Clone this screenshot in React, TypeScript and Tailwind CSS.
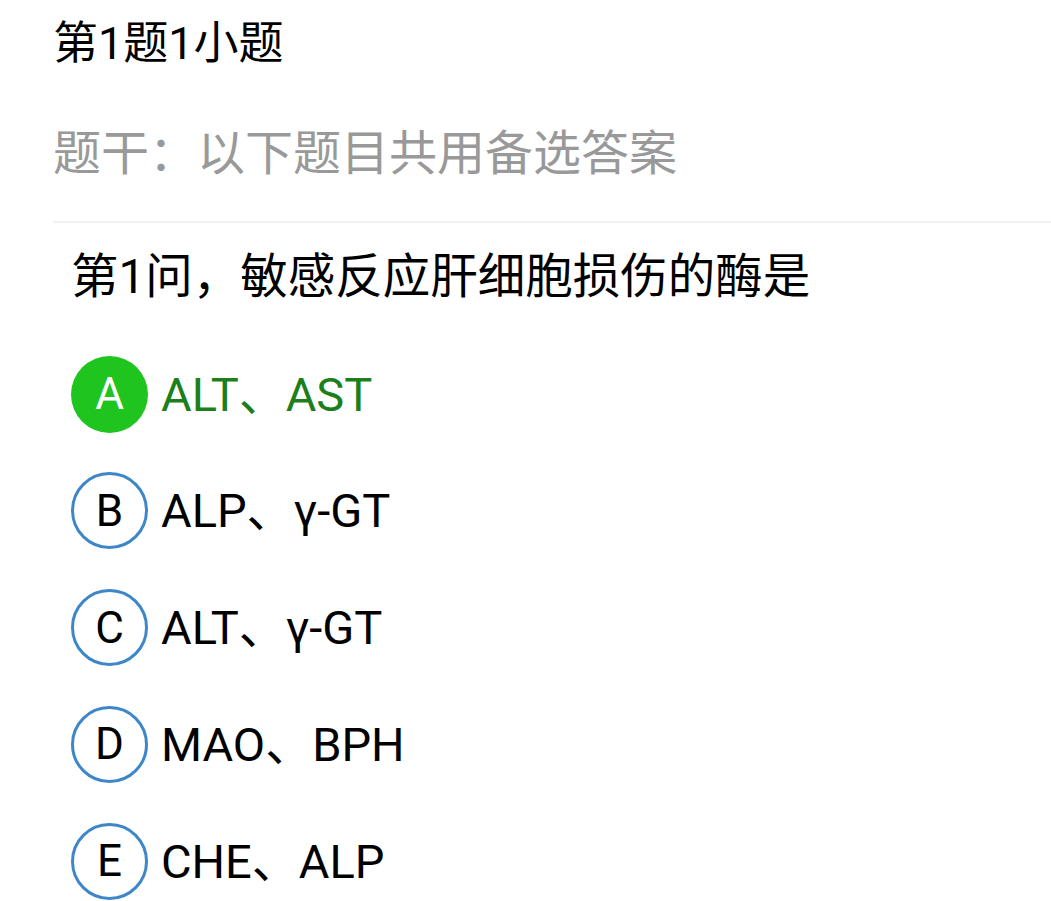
import React from 'react';

type Option = { key: string; text: string; picked?: boolean };

const options: Option[] = [
  { key: 'A', text: 'ALT、AST', picked: true },
  { key: 'B', text: 'ALP、γ-GT' },
  { key: 'C', text: 'ALT、γ-GT' },
  { key: 'D', text: 'MAO、BPH' },
  { key: 'E', text: 'CHE、ALP' },
];

const font = { fontFamily: 'Roboto, "Noto Sans CJK SC", sans-serif' };

export default function App() {
  return (
    <div className="min-h-[901px] w-[1051px] bg-white text-black overflow-hidden" style={font}>
      {/* header */}
      <div className="pl-[53px] pt-[14px]">
        <h1 className="text-[45px] leading-[60px] font-normal">第1题1小题</h1>
        <p className="mt-[50px] text-[48px] leading-[60px] text-[#999999]">题干：以下题目共用备选答案</p>
      </div>
      <div className="ml-[53px] mt-[37px] h-[2px] bg-[#f1f1f1]" />

      {/* question */}
      <div className="pl-[71px] pt-[24px]">
        <p className="text-[47.5px] leading-[60px]">第1问，敏感反应肝细胞损伤的酶是</p>

        <ul className="mt-[48px] flex flex-col gap-[38.75px]">
          {options.map((o) => (
            <li key={o.key} className="flex items-center h-[78px]">
              {o.picked ? (
                <span className="flex items-center justify-center w-[77px] h-[77px] rounded-full bg-[#1fc41f] text-white text-[44px] leading-none">
                  {o.key}
                </span>
              ) : (
                <span className="flex items-center justify-center w-[77px] h-[77px] rounded-full border-[3px] border-[#3d87c9] text-[44px] leading-none">
                  {o.key}
                </span>
              )}
              <span
                className={`ml-[13px] text-[47px] leading-none ${o.picked ? 'text-[#1b801b]' : 'text-black'}`}
              >
                {o.text}
              </span>
            </li>
          ))}
        </ul>
      </div>
    </div>
  );
}
